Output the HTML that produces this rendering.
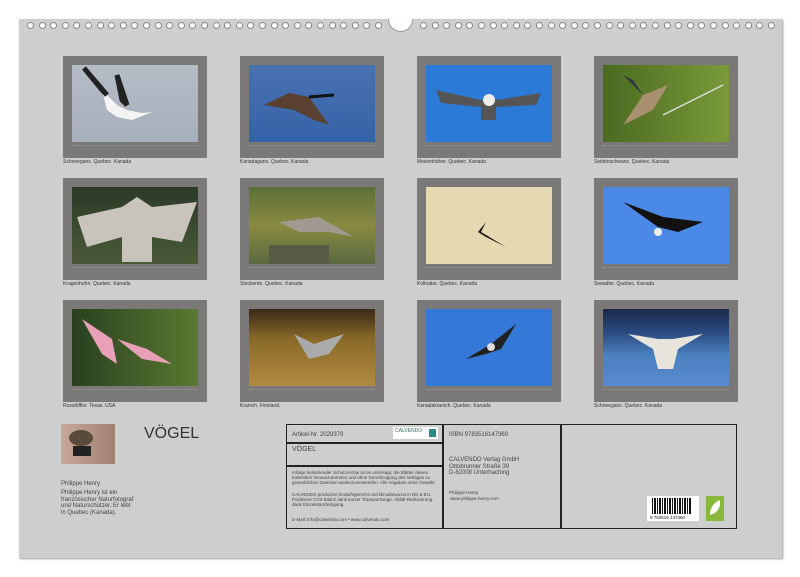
<!DOCTYPE html>
<html><head><meta charset="utf-8"><style>
*{margin:0;padding:0;box-sizing:border-box}
body{width:800px;height:577px;background:#fff;position:relative;overflow:hidden;font-family:"Liberation Sans",sans-serif}
.page{position:absolute;left:19px;top:19px;width:763px;height:539px;background:#cecece;box-shadow:1px 1px 2px #999}
.hole{position:absolute;top:22px;width:7px;height:7px;border:1px solid #888;border-radius:50%;background:#fff}
.hook{position:absolute;left:388px;top:19px;width:25px;height:13px;border-radius:0 0 13px 13px;background:#fff;border:1px solid #999;border-top:none}
.fr{position:absolute;width:144px;height:102px;background:#7a7978}
.ph{position:absolute;left:9px;top:9px;width:126px;height:77px;overflow:hidden}
.cal{position:absolute;left:9px;top:89px;width:126px;height:1px;border-top:1px dotted #999}
.cap{position:absolute;font-size:5px;color:#333;white-space:nowrap}
.t{position:absolute;font-size:5px;color:#444;line-height:5.5px}
</style></head><body>
<div class="page"></div>
<div class="hook"></div>

<div style="position:absolute;left:0;top:0">
<div class="hole" style="left:27px"></div><div class="hole" style="left:39px"></div><div class="hole" style="left:50px"></div><div class="hole" style="left:62px"></div><div class="hole" style="left:73px"></div><div class="hole" style="left:85px"></div><div class="hole" style="left:97px"></div><div class="hole" style="left:108px"></div><div class="hole" style="left:120px"></div><div class="hole" style="left:131px"></div><div class="hole" style="left:143px"></div><div class="hole" style="left:155px"></div><div class="hole" style="left:166px"></div><div class="hole" style="left:178px"></div><div class="hole" style="left:189px"></div><div class="hole" style="left:201px"></div><div class="hole" style="left:213px"></div><div class="hole" style="left:224px"></div><div class="hole" style="left:236px"></div><div class="hole" style="left:247px"></div><div class="hole" style="left:259px"></div><div class="hole" style="left:271px"></div><div class="hole" style="left:282px"></div><div class="hole" style="left:294px"></div><div class="hole" style="left:305px"></div><div class="hole" style="left:317px"></div><div class="hole" style="left:329px"></div><div class="hole" style="left:340px"></div><div class="hole" style="left:352px"></div><div class="hole" style="left:363px"></div><div class="hole" style="left:375px"></div>
<div class="hole" style="left:420px"></div><div class="hole" style="left:432px"></div><div class="hole" style="left:443px"></div><div class="hole" style="left:455px"></div><div class="hole" style="left:466px"></div><div class="hole" style="left:478px"></div><div class="hole" style="left:490px"></div><div class="hole" style="left:501px"></div><div class="hole" style="left:513px"></div><div class="hole" style="left:524px"></div><div class="hole" style="left:536px"></div><div class="hole" style="left:548px"></div><div class="hole" style="left:559px"></div><div class="hole" style="left:571px"></div><div class="hole" style="left:582px"></div><div class="hole" style="left:594px"></div><div class="hole" style="left:606px"></div><div class="hole" style="left:617px"></div><div class="hole" style="left:629px"></div><div class="hole" style="left:640px"></div><div class="hole" style="left:652px"></div><div class="hole" style="left:664px"></div><div class="hole" style="left:675px"></div><div class="hole" style="left:687px"></div><div class="hole" style="left:698px"></div><div class="hole" style="left:710px"></div><div class="hole" style="left:722px"></div><div class="hole" style="left:733px"></div><div class="hole" style="left:745px"></div><div class="hole" style="left:756px"></div><div class="hole" style="left:768px"></div>
</div>

<div class="fr" style="left:63px;top:56px"><div class="ph" style="background:linear-gradient(#b4bcc6,#a6b0bb)"><svg width="126" height="77"><path d="M30 25 L45 40 L55 45 L70 48 L80 47 L60 55 L45 52 L35 45Z" fill="#f4f4f4"/><path d="M12 3 L30 25 L35 30Z M45 10 L50 35 L55 40Z" stroke="#222" stroke-width="5" fill="#222"/></svg></div><div class="cal"></div></div>
<div class="fr" style="left:240px;top:56px"><div class="ph" style="background:linear-gradient(#4a72b0,#3563a8)"><svg width="126" height="77"><path d="M15 40 L40 28 L60 32 L80 60 L65 55 L45 45Z" fill="#5a4030"/><path d="M60 32 L85 30" stroke="#111" stroke-width="3"/></svg></div><div class="cal"></div></div>
<div class="fr" style="left:417px;top:56px"><div class="ph" style="background:#2c7ad8"><svg width="126" height="77"><path d="M10 25 L55 35 L70 35 L115 28 L110 40 L70 42 L70 55 L55 55 L55 42 L15 38Z" fill="#555"/><circle cx="63" cy="35" r="6" fill="#eee"/></svg></div><div class="cal"></div></div>
<div class="fr" style="left:594px;top:56px"><div class="ph" style="background:linear-gradient(90deg,#4a6a20,#7a9a3a)"><svg width="126" height="77"><path d="M20 60 L40 30 L65 20 L50 45Z" fill="#a89070"/><path d="M20 10 L40 30 L30 15Z" fill="#334"/><path d="M60 50 L120 20" stroke="#ddd" stroke-width="1.5"/></svg></div><div class="cal"></div></div>
<div class="cap" style="left:63px;top:159px">Schneegans. Quebec. Kanada</div>
<div class="cap" style="left:240px;top:159px">Kanadagans. Quebec. Kanada</div>
<div class="cap" style="left:417px;top:159px">Meisenhäher. Quebec. Kanada</div>
<div class="cap" style="left:594px;top:159px">Seidenschwanz. Quebec. Kanada</div>

<div class="fr" style="left:63px;top:178px"><div class="ph" style="background:linear-gradient(#2a3a28,#4a5a38)"><svg width="126" height="77"><path d="M5 30 L50 20 L65 10 L80 20 L125 15 L110 55 L80 50 L80 75 L50 75 L50 50 L15 60Z" fill="#c8c4bc"/></svg></div><div class="cal"></div></div>
<div class="fr" style="left:240px;top:178px"><div class="ph" style="background:linear-gradient(#5a7038,#8a8a40 50%,#5a6a40)"><svg width="126" height="77"><path d="M30 35 L70 30 L105 50 L80 45 L50 45Z" fill="#a09a90"/><rect x="20" y="58" width="60" height="19" fill="#5a5a48"/></svg></div><div class="cal"></div></div>
<div class="fr" style="left:417px;top:178px"><div class="ph" style="background:#e6d8b0"><svg width="126" height="77"><path d="M45 15 L60 35 L55 45 L80 60 L60 50 L52 45 L60 35Z" fill="#111"/></svg></div><div class="cal"></div></div>
<div class="fr" style="left:594px;top:178px"><div class="ph" style="background:#4a8ae6"><svg width="126" height="77"><path d="M20 15 L60 30 L100 35 L75 45 L55 40Z" fill="#111"/><circle cx="55" cy="45" r="4" fill="#eee"/></svg></div><div class="cal"></div></div>
<div class="cap" style="left:63px;top:281px">Kragenhuhn. Quebec. Kanada</div>
<div class="cap" style="left:240px;top:281px">Stockente. Quebec. Kanada</div>
<div class="cap" style="left:417px;top:281px">Kolkrabe. Quebec. Kanada</div>
<div class="cap" style="left:594px;top:281px">Seeadler. Quebec. Kanada</div>

<div class="fr" style="left:63px;top:300px"><div class="ph" style="background:linear-gradient(90deg,#2a4020,#5a7a30)"><svg width="126" height="77"><path d="M10 10 L40 30 L45 55 L30 45Z M45 30 L75 40 L100 55 L70 50Z" fill="#e8a0b8"/></svg></div><div class="cal"></div></div>
<div class="fr" style="left:240px;top:300px"><div class="ph" style="background:linear-gradient(#3a2a18,#8a6a28 40%,#b08a40)"><svg width="126" height="77"><path d="M45 25 L65 35 L95 25 L80 45 L60 50Z" fill="#aaa"/></svg></div><div class="cal"></div></div>
<div class="fr" style="left:417px;top:300px"><div class="ph" style="background:#3478d8"><svg width="126" height="77"><path d="M40 50 L65 35 L90 15 L75 40 L60 45Z" fill="#222"/><circle cx="65" cy="38" r="4" fill="#ddd"/></svg></div><div class="cal"></div></div>
<div class="fr" style="left:594px;top:300px"><div class="ph" style="background:linear-gradient(#1a2a4a,#2a4a80 30%,#4a80c0 60%,#5a8ad0)"><svg width="126" height="77"><path d="M25 25 L55 30 L70 30 L100 25 L75 40 L70 60 L55 60 L50 40Z" fill="#e8e4dc"/></svg></div><div class="cal"></div></div>
<div class="cap" style="left:63px;top:403px">Rosalöffler. Texas. USA</div>
<div class="cap" style="left:240px;top:403px">Kranich. Finnland.</div>
<div class="cap" style="left:417px;top:403px">Kanadakranich. Quebec. Kanada</div>
<div class="cap" style="left:594px;top:403px">Schneegans. Quebec. Kanada</div>

<div style="position:absolute;left:61px;top:424px;width:54px;height:40px;background:linear-gradient(90deg,#c8a898,#a08070)"><svg width="54" height="40"><ellipse cx="20" cy="14" rx="12" ry="8" fill="#5a4a3a"/><rect x="12" y="22" width="18" height="10" fill="#222"/></svg></div>
<div style="position:absolute;left:144px;top:425px;font-size:16px;color:#333">VÖGEL</div>
<div class="t" style="left:61px;top:482px;font-size:6px">Philippe Henry</div>
<div class="t" style="left:61px;top:490px;font-size:6px;line-height:6.5px;width:75px">Philippe Henry ist ein französischer Naturfotograf und Naturschützer. Er lebt in Quebec (Kanada).</div>

<div style="position:absolute;left:286px;top:424px;width:451px;height:105px;border:1.5px solid #222"></div>
<div style="position:absolute;left:442px;top:424px;width:1.5px;height:105px;background:#222"></div>
<div style="position:absolute;left:560px;top:424px;width:1.5px;height:105px;background:#222"></div>
<div style="position:absolute;left:286px;top:442px;width:157px;height:1.5px;background:#222"></div>
<div style="position:absolute;left:286px;top:465px;width:157px;height:1.5px;background:#222"></div>
<div class="t" style="left:292px;top:433px;font-size:6px">Artikel-Nr. 2029379</div>
<div style="position:absolute;left:393px;top:427px;width:45px;height:12px;background:#fff;font-size:5px;color:#2a6a6a;padding:1px 2px">CALVENDO<span style="position:absolute;right:2px;top:2px;width:7px;height:8px;background:#2a8a8a"></span></div>
<div class="t" style="left:292px;top:447px;font-size:7px">VÖGEL</div>
<div class="t" style="left:292px;top:470px;width:150px;font-size:4.5px;line-height:5px">Infolge bestehender Schutzrechte ist es untersagt, die Blätter dieses Kalenders herauszutrennen und ohne Genehmigung des Verlages zu gewerblichen Zwecken weiterzuverwenden. Alle Angaben ohne Gewähr.</div>
<div class="t" style="left:292px;top:492px;width:150px;font-size:4.5px;line-height:5px">CALVENDO produziert bedarfsgerecht und klimabewusst in DE &amp; EU. Positivere CO2-Bilanz dank kurzer Transportwege. Abfall-Reduzierung dank Einzelstückfertigung.</div>
<div class="t" style="left:292px;top:517px;font-size:4.5px">E-Mail: info@calvendo.com • www.calvendo.com</div>
<div class="t" style="left:449px;top:433px;font-size:6px">ISBN 9783516147360</div>
<div class="t" style="left:449px;top:457px;font-size:6px;line-height:6.5px">CALVENDO Verlag GmbH<br>Ottobrunner Straße 39<br>D-82008 Unterhaching</div>
<div class="t" style="left:449px;top:490px;font-size:4.5px">Philippe Henry<br>&nbsp;www.philippe-henry.com</div>
<div style="position:absolute;left:647px;top:496px;width:52px;height:25px;background:#fff"><div style="position:absolute;left:5px;top:2px;width:40px;height:16px;background:repeating-linear-gradient(90deg,#111 0 1px,#fff 1px 2px,#111 2px 4px,#fff 4px 5px)"></div><div style="position:absolute;left:3px;top:19px;font-size:4.5px;color:#111">9 783516 147360</div></div>
<div style="position:absolute;left:706px;top:496px;width:18px;height:25px;background:#8ab83a"><svg width="18" height="25"><path d="M4 19 Q4 8 14 4 Q15 16 4 19Z" fill="#fff"/></svg></div>
</body></html>
